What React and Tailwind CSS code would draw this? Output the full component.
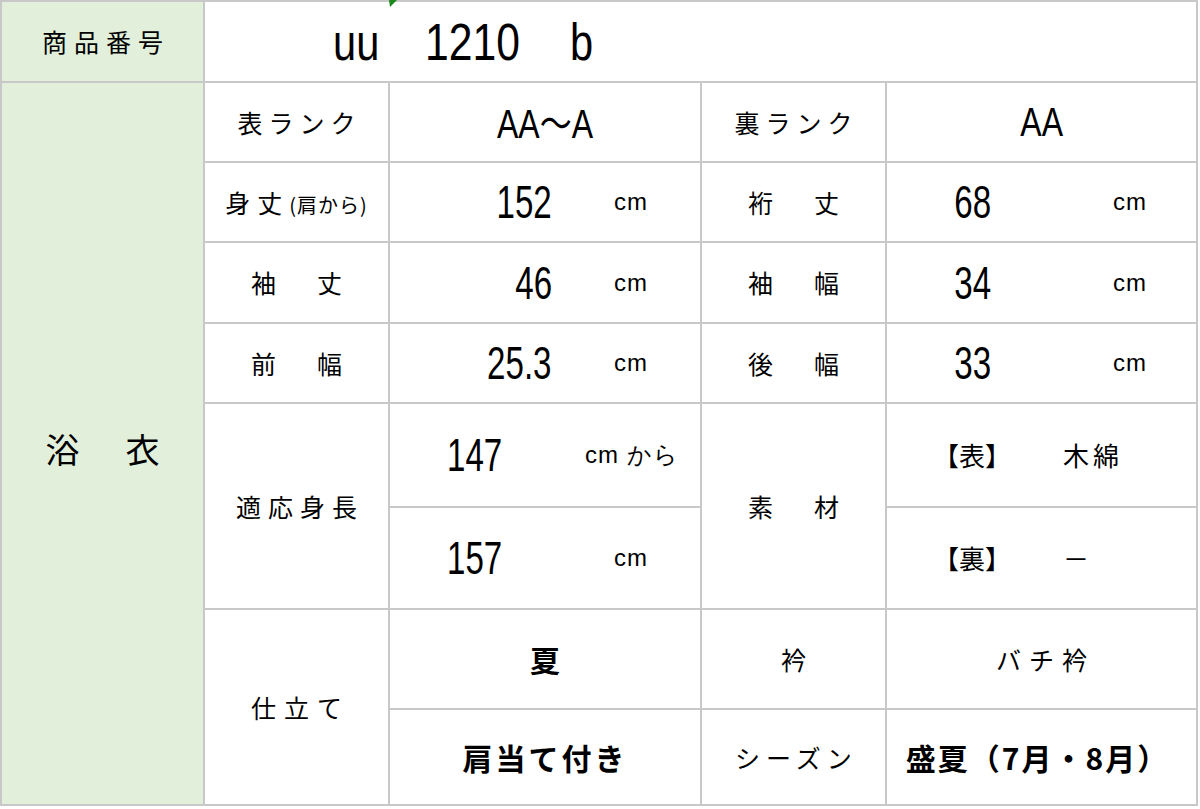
const jp = "[font-family:'Noto_Sans_CJK_JP',sans-serif]"

function Num({ children, size = 'text-[46px]', origin = 'origin-center', scale = 'scale-x-[0.72]' }) {
  return (
    <span className={`inline-block font-['Liberation_Sans'] leading-none ${size} ${scale} ${origin}`}>
      {children}
    </span>
  )
}

function Cm({ children = 'cm' }) {
  return <span className="font-['Liberation_Sans'] text-[24px] leading-none tracking-[1px]">{children}</span>
}

function Cell({ children, className = '' }) {
  return <div className={`bg-white flex items-center ${className}`}>{children}</div>
}

function Label({ children, className = '', tr = 'tracking-[7px] -mr-[7px]' }) {
  return (
    <Cell className={`justify-center ${className}`}>
      <span className={`${jp} text-[25px] leading-none ${tr}`}>{children}</span>
    </Cell>
  )
}

function Measure({ value, numW, unitW = 0 }) {
  // number right-aligned in a fixed box, unit after it
  return (
    <Cell>
      <div className="text-right" style={{ width: numW }}>
        <Num origin="origin-right">{value}</Num>
      </div>
      <div style={{ width: unitW }} />
      <Cm />
    </Cell>
  )
}

export default function App() {
  return (
    <div className={`w-[1200px] h-[809px] bg-white relative ${jp} text-black`}>
      <div className="grid grid-cols-[201px_183px_310px_183px_309px] grid-rows-[79px_78px_78px_79px_78px_102px_100px_98px_94px] gap-[2px] p-[2px] bg-[#c8c8c8] w-[1198px]">

        {/* header row */}
        <div className="bg-[#e2efda] flex items-center justify-center">
          <span className="text-[25px] leading-none tracking-[7px] -mr-[7px]">商品番号</span>
        </div>
        <Cell className="col-span-4 pl-[128px]">
          <div className="w-[92px]"><Num size="text-[52px]" scale="scale-x-[0.8]" origin="origin-left">uu</Num></div>
          <div className="w-[145px]"><Num size="text-[52px]" scale="scale-x-[0.82]" origin="origin-left">1210</Num></div>
          <div><Num size="text-[52px]" scale="scale-x-[0.8]" origin="origin-left">b</Num></div>
        </Cell>

        {/* left group label */}
        <div className="bg-[#e2efda] row-span-8 flex items-center justify-center pt-[10px]">
          <span className="text-[34px] leading-none tracking-[6px] -mr-[6px]">浴　衣</span>
        </div>

        {/* rank */}
        <Label tr="tracking-[6px] -mr-[6px]">表ランク</Label>
        <Cell className="justify-center">
          <span className="inline-block font-['Liberation_Sans'] text-[40px] leading-none scale-x-[0.8]">
            AA<span className={jp}>～</span>A
          </span>
        </Cell>
        <Label tr="tracking-[6px] -mr-[6px]">裏ランク</Label>
        <Cell className="justify-center">
          <Num size="text-[40px]" scale="scale-x-[0.8]">AA</Num>
        </Cell>

        {/* measurements */}
        <Label tr="tracking-normal">
          <span className="tracking-[7px]">身丈</span>
          <span className="text-[20px] tracking-[1px]">(肩から)</span>
        </Label>
        <Measure value="152" numW={162} unitW={62} />
        <Label tr="tracking-[8px] -mr-[8px]">裄　丈</Label>
        <Measure value="68" numW={104} unitW={122} />

        <Label tr="tracking-[8px] -mr-[8px]">袖　丈</Label>
        <Measure value="46" numW={162} unitW={62} />
        <Label tr="tracking-[8px] -mr-[8px]">袖　幅</Label>
        <Measure value="34" numW={104} unitW={122} />

        <Label tr="tracking-[8px] -mr-[8px]">前　幅</Label>
        <Measure value="25.3" numW={162} unitW={62} />
        <Label tr="tracking-[8px] -mr-[8px]">後　幅</Label>
        <Measure value="33" numW={104} unitW={122} />

        {/* height / material */}
        <Label className="row-span-2" tr="tracking-[7px] -mr-[7px]">適応身長</Label>
        <Cell className="pl-[57px]">
          <div className="w-[138px]"><Num origin="origin-left">147</Num></div>
          <Cm>cm から</Cm>
        </Cell>
        <Label className="row-span-2" tr="tracking-[8px] -mr-[8px]">素　材</Label>
        <Cell className="pl-[46px]">
          <span className="text-[26px] leading-none">【表】</span>
          <span className="text-[26px] leading-none ml-[52px] tracking-[4px]">木綿</span>
        </Cell>

        <Cell className="pl-[57px]">
          <div className="w-[167px]"><Num origin="origin-left">157</Num></div>
          <Cm />
        </Cell>
        <Cell className="pl-[46px]">
          <span className="text-[26px] leading-none">【裏】</span>
          <span className="text-[26px] leading-none ml-[52px]">－</span>
        </Cell>

        {/* tailoring */}
        <Label className="row-span-2" tr="tracking-[8px] -mr-[8px]">仕立て</Label>
        <Cell className="justify-center">
          <span className="text-[30px] font-bold leading-none">夏</span>
        </Cell>
        <Label tr="tracking-normal">衿</Label>
        <Label tr="tracking-[8px] -mr-[8px]">バチ衿</Label>

        <Cell className="justify-center">
          <span className="text-[30px] font-bold leading-none tracking-[3px]">肩当て付き</span>
        </Cell>
        <Label tr="tracking-[6px] -mr-[6px]">シーズン</Label>
        <Cell className="justify-center pr-[8px]">
          <span className="text-[30px] font-bold leading-none tracking-[2px]">盛夏（7月・8月）</span>
        </Cell>
      </div>

      {/* excel comment marker */}
      <svg className="absolute left-[389px] top-0" width="8" height="7" viewBox="0 0 8 7">
        <polygon points="0,0 8,0 1,7" fill="#1a8a1a" />
      </svg>
    </div>
  )
}
